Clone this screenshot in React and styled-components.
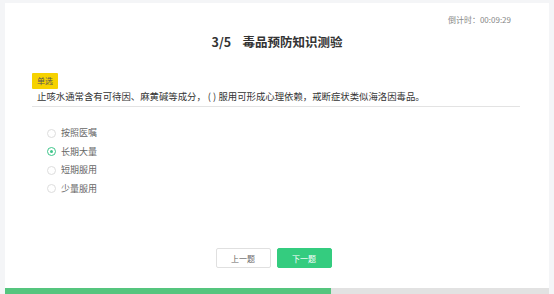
import React from 'react'
import styled, { createGlobalStyle } from 'styled-components'

const Global = createGlobalStyle`
  html, body { margin: 0; padding: 0; background: #f4f5f7; }
  body { font-family: "Microsoft YaHei", "Noto Sans CJK SC", sans-serif; }
`

const options = ['按照医嘱', '长期大量', '短期服用', '少量服用']

export default function App() {
  const checked = 1
  const progress = 3 / 5
  return (
    <>
      <Global />
      <Page>
        <Card>
          <Timer>倒计时：00:09:29</Timer>
          <Title>3/5&nbsp;&nbsp;&nbsp;&nbsp;毒品预防知识测验</Title>
          <Question>
            <Tag>单选</Tag>
            <Stem>止咳水通常含有可待因、麻黄碱等成分， ( ) 服用可形成心理依赖，戒断症状类似海洛因毒品。</Stem>
          </Question>
          <Options>
            {options.map((o, i) => (
              <Option key={o}>
                <Radio $on={i === checked} />
                {o}
              </Option>
            ))}
          </Options>
          <Actions>
            <Button>上一题</Button>
            <Button $primary>下一题</Button>
          </Actions>
          <Progress>
            <Fill style={{ width: `${progress * 100}%` }} />
          </Progress>
        </Card>
      </Page>
    </>
  )
}

const Page = styled.div`
  width: 554px;
  height: 294px;
  padding: 3px 5px 0 5px;
  box-sizing: border-box;
  overflow: hidden;
`

const Card = styled.div`
  background: #fff;
  height: 291px;
  display: flex;
  flex-direction: column;
`

const Timer = styled.div`
  align-self: flex-end;
  margin: 12px 38px 0 0;
  font-size: 8px;
  line-height: 10px;
  color: #888;
`

const Title = styled.div`
  margin-top: 9px;
  text-align: center;
  font-size: 12.5px;
  font-weight: bold;
  color: #333;
  line-height: 16px;
`

const Question = styled.div`
  margin: 15px 29px 0 27px;
  border-bottom: 1px solid #e3e3e3;
  padding-bottom: 3px;
`

const Tag = styled.span`
  display: inline-block;
  background: #f6d200;
  color: #555;
  font-size: 8px;
  line-height: 16px;
  padding: 0 5px;
  border-radius: 1px;
`

const Stem = styled.div`
  margin-top: 1px;
  padding-left: 5px;
  font-size: 9.4px;
  line-height: 13px;
  color: #333;
`

const Options = styled.div`
  margin: 20px 0 0 42px;
  display: flex;
  flex-direction: column;
  gap: 6px;
`

const Option = styled.label`
  display: flex;
  align-items: center;
  gap: 5px;
  font-size: 9px;
  line-height: 12.5px;
  color: #666;
`

const Radio = styled.span`
  width: 7px;
  height: 7px;
  border-radius: 50%;
  border: 1px solid ${p => (p.$on ? '#3ec58a' : '#ddd')};
  display: flex;
  align-items: center;
  justify-content: center;
  &::after {
    content: '';
    width: 3px;
    height: 3px;
    border-radius: 50%;
    background: ${p => (p.$on ? '#3ec58a' : 'transparent')};
  }
`

const Actions = styled.div`
  margin-top: auto;
  margin-bottom: 20px;
  display: flex;
  justify-content: center;
  gap: 6px;
  padding-right: 7px;
`

const Button = styled.button`
  width: 55px;
  height: 20px;
  border-radius: 2px;
  font-family: inherit;
  font-size: 8px;
  border: 1px solid ${p => (p.$primary ? '#34cc7f' : '#e0e0e0')};
  background: ${p => (p.$primary ? '#34cc7f' : '#fff')};
  color: ${p => (p.$primary ? '#fff' : '#666')};
  padding: 0;
`

const Progress = styled.div`
  height: 6px;
  background: #e2e2e2;
`

const Fill = styled.div`
  height: 100%;
  background: #55c57e;
`
